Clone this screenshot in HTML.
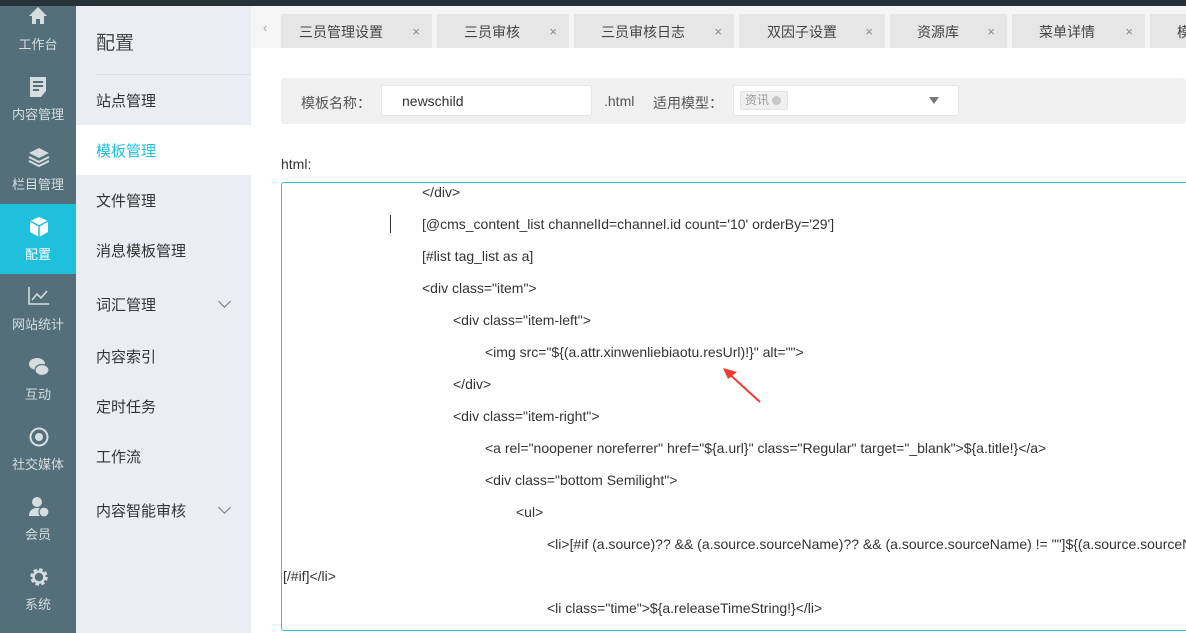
<!DOCTYPE html>
<html><head><meta charset="utf-8"><style>
*{margin:0;padding:0;box-sizing:border-box}
body{width:1186px;height:633px;overflow:hidden;position:relative;background:#fff;font-family:"Liberation Sans","Noto Sans CJK SC",sans-serif;color:#333}
.abs{position:absolute}
#top{left:0;top:0;width:1186px;height:6px;background:#263238;z-index:5}
#side{left:0;top:0;width:76px;height:633px;background:#546e7a;overflow:hidden}
.si{position:absolute;left:0;width:76px;height:70px;color:#d5dde0;font-size:13px;text-align:center}
.si .lb{position:absolute;left:0;right:0;top:40px}
.si svg{position:absolute;left:28px;top:12px}
.si.act{background:#1fc0dc;color:#fff}
#sub{left:76px;top:6px;width:175px;height:627px;background:#eaedf1}
.mi{position:absolute;left:0;width:175px;height:50px;line-height:54px;padding-left:20px;font-size:15px;color:#333}
.mi.act{background:#fff;color:#1fc0dc}
.chev{position:absolute;right:22px;top:18px;width:9px;height:9px;border-right:1px solid #777;border-bottom:1px solid #777;transform:rotate(45deg)}
#tabs{left:251px;top:6px;width:935px;height:42px;background:#f5f5f5}
.tab{position:absolute;top:8px;height:34px;background:#e6e6e6;font-size:14px;color:#444;line-height:36px}
.tab .x{position:absolute;right:12px;top:0;font-size:13px;color:#888}
.code{position:absolute;font-size:14px;color:#333;white-space:nowrap}
</style></head><body>
<div id="top" class="abs"></div>
<div id="side" class="abs">
 <div class="si" style="top:-6px"><svg width="20" height="20" viewBox="0 0 20 20"><path d="M10 1L1 10h3v8h4v-5h4v5h4v-8h3z" fill="#d5dde0"/></svg><div class="lb">工作台</div></div>
 <div class="si" style="top:64px"><svg width="20" height="22" viewBox="0 0 20 22"><path d="M2 1h16v14l-5 6H2z" fill="#d5dde0"/><path d="M5 6h10M5 10h10M5 14h6" stroke="#546e7a" stroke-width="2"/></svg><div class="lb">内容管理</div></div>
 <div class="si" style="top:134px"><svg width="22" height="22" viewBox="0 0 22 22"><path d="M11 2L1 7l10 5 10-5z" fill="#d5dde0"/><path d="M1 11l10 5 10-5M1 15l10 5 10-5" fill="none" stroke="#d5dde0" stroke-width="2"/></svg><div class="lb">栏目管理</div></div>
 <div class="si act" style="top:204px;"><svg width="22" height="22" viewBox="0 0 22 22"><path d="M11 1l9 4v11l-9 5-9-5V5z" fill="#fff"/><path d="M2 5l9 5 9-5M11 10v11" stroke="#1fc0dc" stroke-width="1.5" fill="none"/></svg><div class="lb">配置</div></div>
 <div class="si" style="top:274px"><svg width="22" height="20" viewBox="0 0 22 20"><path d="M1 1v17h20M4 14l5-6 4 4 6-7" fill="none" stroke="#d5dde0" stroke-width="1.6"/></svg><div class="lb">网站统计</div></div>
 <div class="si" style="top:344px"><svg width="22" height="22" viewBox="0 0 22 22"><ellipse cx="9" cy="8" rx="8" ry="6" fill="#d5dde0"/><ellipse cx="14" cy="14" rx="7" ry="5.5" fill="#d5dde0" stroke="#546e7a" stroke-width="1.2"/></svg><div class="lb">互动</div></div>
 <div class="si" style="top:414px"><svg width="22" height="22" viewBox="0 0 22 22"><circle cx="11" cy="11" r="8.5" fill="none" stroke="#d5dde0" stroke-width="2"/><circle cx="11" cy="11" r="4" fill="#d5dde0"/></svg><div class="lb">社交媒体</div></div>
 <div class="si" style="top:484px"><svg width="22" height="22" viewBox="0 0 22 22"><circle cx="9" cy="6" r="5" fill="#d5dde0"/><path d="M1 20c0-6 4-8 8-8s6 1 7 3v5z" fill="#d5dde0"/><circle cx="16" cy="16" r="5" fill="#d5dde0" stroke="#546e7a" stroke-width="1.2"/></svg><div class="lb">会员</div></div>
 <div class="si" style="top:554px"><svg width="22" height="22" viewBox="0 0 22 22"><circle cx="11" cy="11" r="6.5" fill="none" stroke="#d5dde0" stroke-width="4.5" stroke-dasharray="3 2.1"/><circle cx="11" cy="11" r="5.5" fill="none" stroke="#d5dde0" stroke-width="2.4"/></svg><div class="lb">系统</div></div>
</div>
<div id="sub" class="abs">
 <div style="position:absolute;left:20px;top:22px;font-size:19px;color:#444">配置</div>
 <div style="position:absolute;left:19px;top:68px;width:156px;height:1px;background:#dcdfe3"></div>
 <div class="mi" style="top:69px">站点管理</div>
 <div class="mi act" style="top:119px">模板管理</div>
 <div class="mi" style="top:169px">文件管理</div>
 <div class="mi" style="top:219px">消息模板管理</div>
 <div class="mi" style="top:273px">词汇管理<span class="chev"></span></div>
 <div class="mi" style="top:325px">内容索引</div>
 <div class="mi" style="top:375px">定时任务</div>
 <div class="mi" style="top:425px">工作流</div>
 <div class="mi" style="top:479px">内容智能审核<span class="chev"></span></div>
</div>
<div id="tabs" class="abs">
 <div style="position:absolute;left:12px;top:14px;color:#aaa;font-size:13px">‹</div>
 <div class="tab" style="left:30px;width:151px;padding-left:18px">三员管理设置<span class="x">×</span></div>
 <div class="tab" style="left:186px;width:132px;padding-left:27px">三员审核<span class="x">×</span></div>
 <div class="tab" style="left:323px;width:160px;padding-left:27px">三员审核日志<span class="x">×</span></div>
 <div class="tab" style="left:488px;width:146px;padding-left:28px">双因子设置<span class="x">×</span></div>
 <div class="tab" style="left:639px;width:117px;padding-left:27px">资源库<span class="x">×</span></div>
 <div class="tab" style="left:761px;width:133px;padding-left:27px">菜单详情<span class="x">×</span></div>
 <div class="tab" style="left:899px;width:40px;padding-left:27px">模</div>
</div>
<div class="abs" style="left:281px;top:78px;width:905px;height:46px;background:#f0f0f0;border-radius:3px"></div>
<div class="abs" style="left:301px;top:93px;font-size:14px;color:#555">模板名称：</div>
<div class="abs" style="left:381px;top:85px;width:211px;height:31px;background:#fff;border:1px solid #e5e5e5;border-radius:3px;font-size:14px;line-height:31px;padding-left:20px;color:#333">newschild</div>
<div class="abs" style="left:604px;top:93px;font-size:14px;color:#555">.html</div>
<div class="abs" style="left:653px;top:93px;font-size:14px;color:#555">适用模型：</div>
<div class="abs" style="left:733px;top:85px;width:226px;height:31px;background:#fff;border:1px solid #e5e5e5;border-radius:3px"></div>
<div class="abs" style="left:740px;top:91px;width:48px;height:19px;background:#f0f0f0;border:1px solid #e3e3e3;border-radius:2px;font-size:12px;color:#999;line-height:17px;padding-left:4px">资讯 <span style="display:inline-block;width:9px;height:9px;border-radius:50%;background:#c8c8c8;vertical-align:-1px"></span></div>
<div class="abs" style="left:929px;top:97px;width:0;height:0;border-left:5px solid transparent;border-right:5px solid transparent;border-top:7px solid #777"></div>
<div class="abs" style="left:281px;top:156px;font-size:14px;color:#333">html:</div>
<div class="abs" style="left:281px;top:182px;width:910px;height:449px;border:1px solid #2ac3dc;border-radius:3px"></div>
<div class="abs" style="left:390px;top:215px;width:1px;height:18px;background:#333"></div>
<div class="code" style="left:422px;top:184px">&lt;/div&gt;</div>
<div class="code" style="left:422px;top:216px">[@cms_content_list channelId=channel.id count='10' orderBy='29']</div>
<div class="code" style="left:422px;top:248px">[#list tag_list as a]</div>
<div class="code" style="left:422px;top:280px">&lt;div class="item"&gt;</div>
<div class="code" style="left:453px;top:312px">&lt;div class="item-left"&gt;</div>
<div class="code" style="left:485px;top:344px">&lt;img src="${(a.attr.xinwenliebiaotu.resUrl)!}" alt=""&gt;</div>
<div class="code" style="left:453px;top:376px">&lt;/div&gt;</div>
<div class="code" style="left:453px;top:408px">&lt;div class="item-right"&gt;</div>
<div class="code" style="left:485px;top:440px">&lt;a rel="noopener noreferrer" href="${a.url}" class="Regular" target="_blank"&gt;${a.title!}&lt;/a&gt;</div>
<div class="code" style="left:485px;top:472px">&lt;div class="bottom Semilight"&gt;</div>
<div class="code" style="left:516px;top:504px">&lt;ul&gt;</div>
<div class="code" style="left:547px;top:536px">&lt;li&gt;[#if (a.source)?? &amp;&amp; (a.source.sourceName)?? &amp;&amp; (a.source.sourceName) != ""]${(a.source.sourceName)!}</div>
<div class="code" style="left:283px;top:568px">[/#if]&lt;/li&gt;</div>
<div class="code" style="left:547px;top:600px">&lt;li class="time"&gt;${a.releaseTimeString!}&lt;/li&gt;</div>
<svg class="abs" style="left:720px;top:365px" width="45" height="40" viewBox="0 0 45 40"><path d="M40 37L6 6" stroke="#f03c2e" stroke-width="2"/><path d="M3 3l14 4-9 7z" fill="#f03c2e"/></svg>
</body></html>
